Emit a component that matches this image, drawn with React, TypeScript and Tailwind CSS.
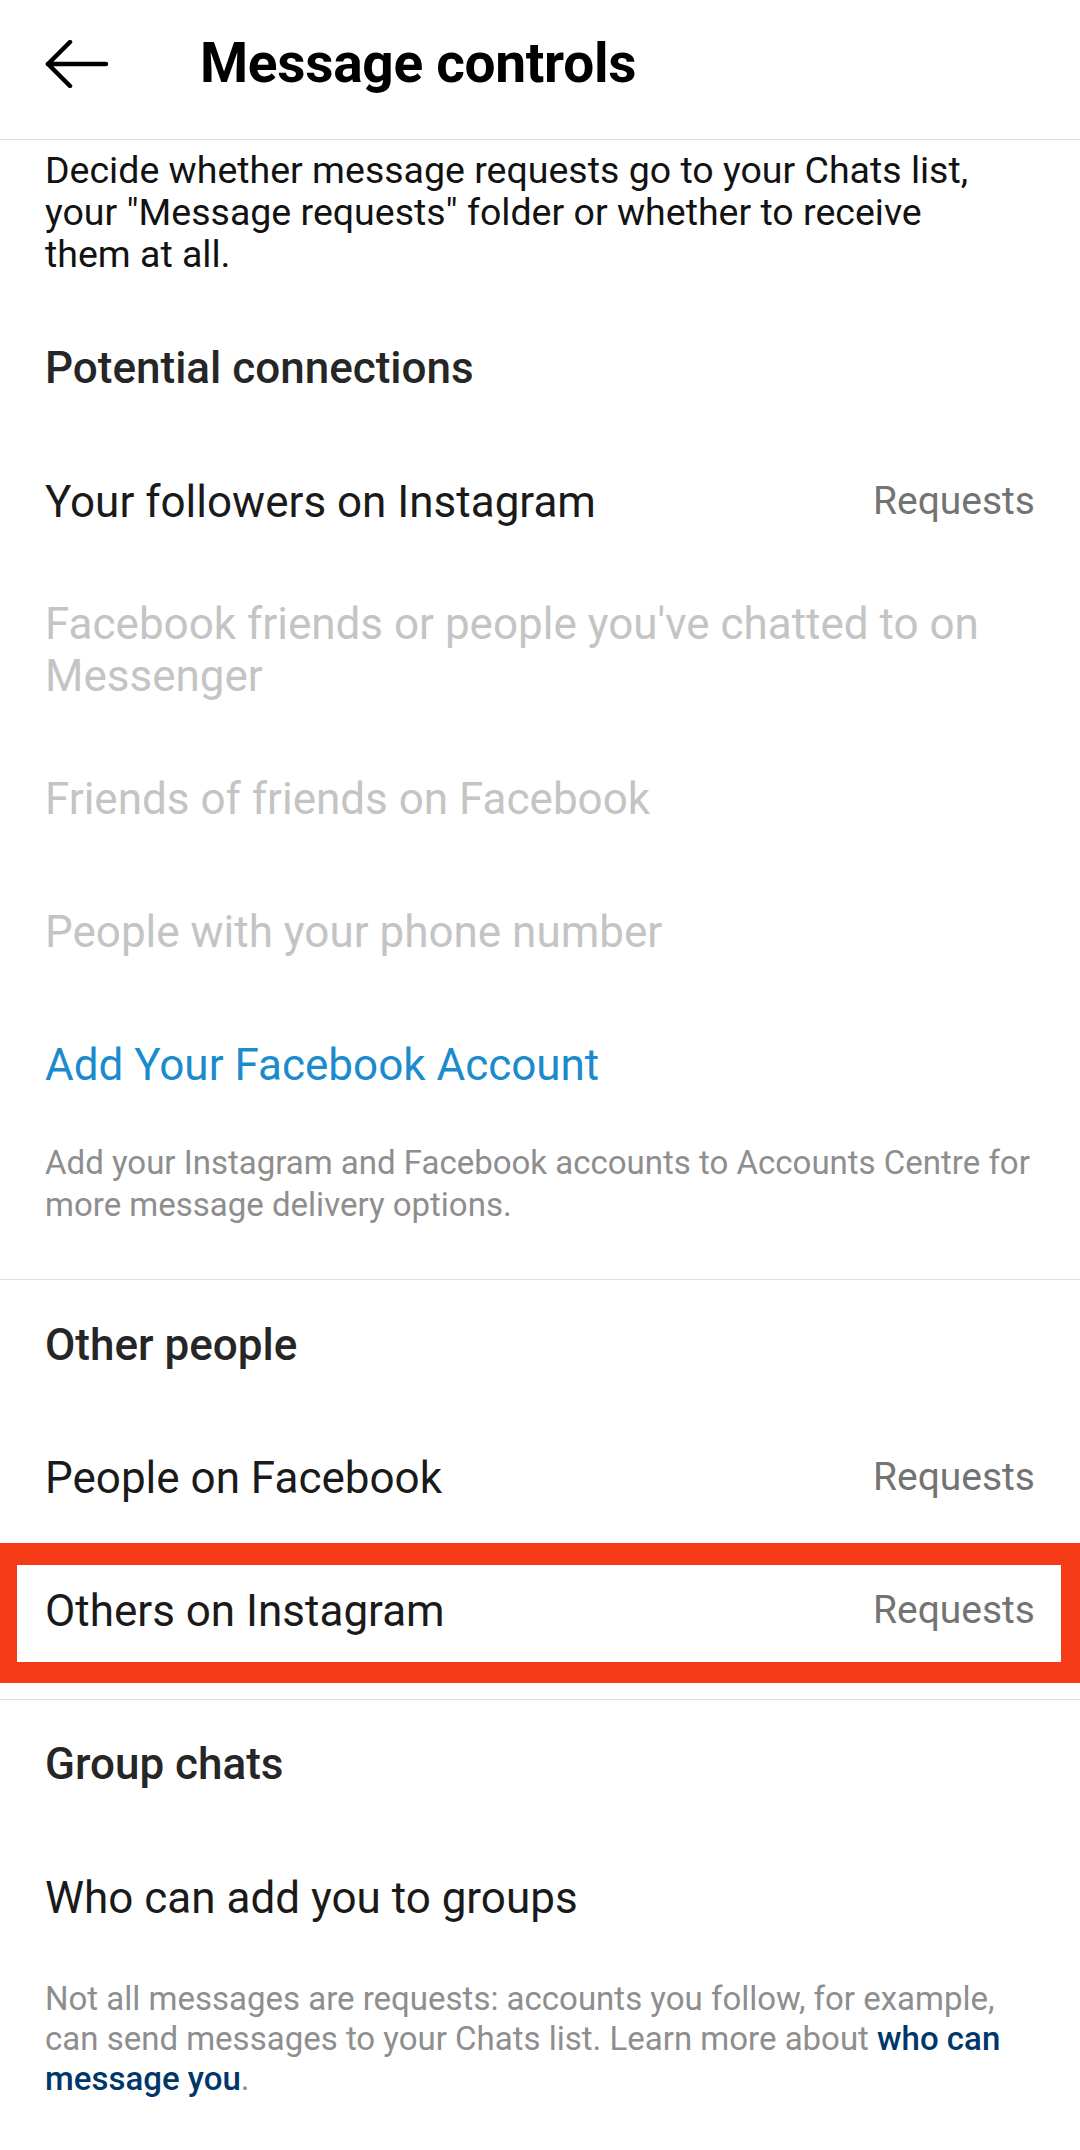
import React from 'react';

const font = { fontFamily: 'Roboto, "Noto Sans", sans-serif' };

function Row({ label, value, muted }: { label: string; value?: string; muted?: boolean }) {
  return (
    <div className="flex min-h-[133px] items-center justify-between gap-6 px-[45px] py-[30px]">
      <span className={`text-[44px] leading-[52px] ${muted ? 'text-[#c4c4c4]' : 'text-[#1a1a1a]'}`}>{label}</span>
      {value && <span className="shrink-0 text-[39px] text-[#737373]">{value}</span>}
    </div>
  );
}

function SectionTitle({ children }: { children: React.ReactNode }) {
  return (
    <h2 className="px-[45px] text-[44px] font-medium leading-[50px] text-[#262626]">{children}</h2>
  );
}

export default function App() {
  return (
    <div className="min-h-[2150px] w-[1080px] bg-white" style={font}>
      {/* Top bar */}
      <div className="flex h-[140px] items-center border-b border-[#dedede] pb-[12px]">
        <button className="ml-[45px] flex h-[60px] w-[64px] items-center">
          <svg width="64" height="48" viewBox="0 0 64 48" fill="none" stroke="#000" strokeWidth="4.5" strokeLinecap="round" strokeLinejoin="round">
            <path d="M3 24h58" />
            <path d="M25 2L3 24l22 22" />
          </svg>
        </button>
        <h1 className="ml-[91px] text-[55px] font-bold tracking-[-0.3px] text-black">Message controls</h1>
      </div>

      <p className="w-[1040px] px-[45px] pt-[9px] text-[37.5px] leading-[42px] text-[#121212]">
        Decide whether message requests go to your Chats list, your "Message requests" folder or whether to
        receive them at all.
      </p>

      {/* Potential connections */}
      <div className="mt-[68px]">
        <SectionTitle>Potential connections</SectionTitle>
      </div>
      <div className="mt-[42px]">
        <Row label="Your followers on Instagram" value="Requests" />
        <Row label="Facebook friends or people you've chatted to on Messenger" muted />
        <Row label="Friends of friends on Facebook" muted />
        <Row label="People with your phone number" muted />
        <div className="flex min-h-[133px] items-center px-[45px]">
          <span className="text-[44px] leading-[52px] text-[#1b8bcd]">Add Your Facebook Account</span>
        </div>
      </div>
      <p className="mt-[11px] px-[45px] text-[33px] leading-[42px] text-[#8e8e8e]">
        Add your Instagram and Facebook accounts to Accounts Centre for more message delivery options.
      </p>

      <div className="mt-[53px] border-t border-[#dedede]" />

      {/* Other people */}
      <div className="mt-[40px]">
        <SectionTitle>Other people</SectionTitle>
      </div>
      <div className="mt-[41px]">
        <Row label="People on Facebook" value="Requests" />
        <div className="relative">
          <Row label="Others on Instagram" value="Requests" />
          <div className="pointer-events-none absolute -bottom-[6px] -top-[1px] left-0 right-0 border-b-[21px] border-l-[17px] border-r-[19px] border-t-[22px] border-[#f43a16]" />
        </div>
      </div>

      <div className="mt-[22px] border-t border-[#dedede]" />

      {/* Group chats */}
      <div className="mt-[39px]">
        <SectionTitle>Group chats</SectionTitle>
      </div>
      <div className="mt-[42px]">
        <Row label="Who can add you to groups" />
      </div>
      <p className="mt-[15px] px-[45px] text-[33px] leading-[40px] text-[#8e8e8e]">
        Not all messages are requests: accounts you follow, for example, can send messages to your Chats
        list. Learn more about <span className="font-medium text-[#00376b]">who can message you</span>.
      </p>
    </div>
  );
}
